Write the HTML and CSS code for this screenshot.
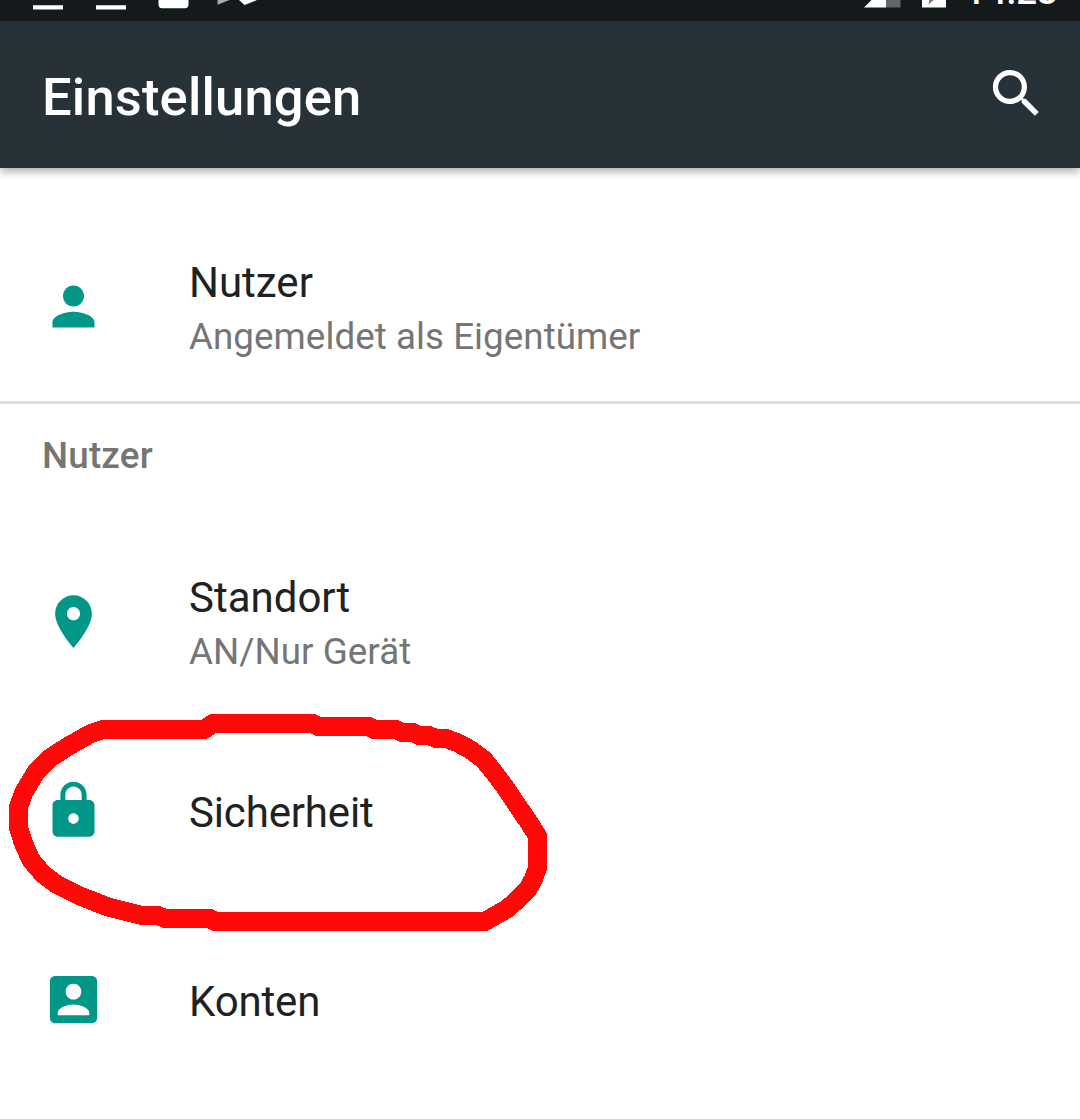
FILE: index.html
```
<!DOCTYPE html>
<html lang="de">
<head>
<meta charset="utf-8">
<title>Einstellungen</title>
<link rel="stylesheet" href="styles.css">
</head>
<body>
<div class="status-bar">
  <svg class="status-left" width="270" height="21" viewBox="0 0 270 21">
    <path fill="#fff" d="M33 5.3h30v4.2H33zM96 5.3h30v4.2H96zM158.500 0h30v4.500q0 3.700-3.500 3.700h-23q-3.500 0-3.500-3.700z"/>
    <path fill="#a9abac" d="M217.500 0h12l-12 4.800z"/>
    <path fill="#fff" d="M239 0h18l-12.500 5z"/>
  </svg>
  <div class="status-right">
    <svg width="90" height="21" viewBox="0 0 90 21">
      <path fill="#fff" d="M7.500 0H22v7.500H0zM58 0h24v7.500H58z"/>
      <path fill="#636466" d="M22 0h14.500v7.500H22z"/>
      <path fill="#6c6e70" d="M65.500 0h4l-5 4.500z"/>
    </svg>
    <span class="clock">14:23</span>
  </div>
</div>
<header class="app-bar">
  <h1 class="app-title">Einstellungen</h1>
  <svg class="icon" viewBox="0 0 24 24"><path d="M15.500 14h-.79l-.28-.27C15.410 12.590 16 11.110 16 9.500 16 5.910 13.090 3 9.500 3S3 5.910 3 9.500 5.910 16 9.500 16c1.610 0 3.090-.59 4.230-1.570l.27.28v.79l5 4.990L20.490 19l-4.990-5zm-6 0C7.010 14 5 11.990 5 9.500S7.010 5 9.500 5 14 7.010 14 9.500 11.990 14 9.500 14z"/></svg>
</header>
<main class="settings">
  <section class="group group-first">
    <div class="row">
      <svg class="icon" viewBox="0 0 24 24"><path d="M12 12c2.210 0 4-1.790 4-4s-1.790-4-4-4-4 1.790-4 4 1.790 4 4 4zm0 2c-2.670 0-8 1.340-8 4v2h16v-2c0-2.660-5.330-4-8-4z"/></svg>
      <div class="row-text"><div class="row-title">Nutzer</div><div class="row-summary">Angemeldet als Eigentümer</div></div>
    </div>
  </section>
  <section class="group">
    <h2 class="group-title">Nutzer</h2>
    <div class="row">
      <svg class="icon" viewBox="0 0 24 24"><path d="M12 2C8.130 2 5 5.130 5 9c0 5.250 7 13 7 13s7-7.750 7-13c0-3.870-3.130-7-7-7zm0 9.500c-1.380 0-2.500-1.120-2.500-2.500s1.120-2.500 2.500-2.500 2.500 1.120 2.500 2.500-1.120 2.500-2.500 2.500z"/></svg>
      <div class="row-text"><div class="row-title">Standort</div><div class="row-summary">AN/Nur Gerät</div></div>
    </div>
    <div class="row marked">
      <svg class="icon" viewBox="0 0 24 24"><path d="M18 8h-1V6c0-2.760-2.240-5-5-5S7 3.240 7 6v2H6c-1.100 0-2 .9-2 2v10c0 1.100.9 2 2 2h12c1.100 0 2-.9 2-2V10c0-1.100-.9-2-2-2zm-6 9c-1.100 0-2-.9-2-2s.9-2 2-2 2 .9 2 2-.9 2-2 2zm3.100-9H8.900V6c0-1.710 1.390-3.100 3.100-3.100 1.710 0 3.100 1.390 3.100 3.100v2z"/></svg>
      <div class="row-text row-text-single"><div class="row-title">Sicherheit</div></div>
      <svg class="marker" viewBox="0 700 560 240"><path d="M103 729.500H204L213 723.500H313L318 726.500H369L374 729.500H396L402 732.500H413L419 735.500H429L436 738.500H446L458 743 471 750 484 760 493 771 505 787 517 805 528 821 537.500 836V868L533 880 528 889 518 899 507 909 496 915 485 921.500H215L210 918.500H165L158 915.500H142L128 912 108 907 80 896 56 884 43 874 31 860 23 842 18.500 828V807L24 792 36 772 50 758 67 747 90 734Z"/></svg>
    </div>
    <div class="row">
      <svg class="icon" viewBox="0 0 24 24"><path d="M3 5v14c0 1.100.89 2 2 2h14c1.100 0 2-.9 2-2V5c0-1.100-.9-2-2-2H5c-1.110 0-2 .9-2 2zm12 4c0 1.660-1.340 3-3 3s-3-1.340-3-3 1.340-3 3-3 3 1.340 3 3zm-9 8c0-2 4-3.100 6-3.100s6 1.100 6 3.100v1H6v-1z"/></svg>
      <div class="row-text row-text-single"><div class="row-title">Konten</div></div>
    </div>
  </section>
</main>
</body>
</html>
```
FILE: styles.css
```
body {
  margin: 0;
  height: 1119px;
  overflow: hidden;
  background: #fff;
  color: #212121;
  font-family: Roboto, sans-serif;
}

svg {
  display: block;
  flex: none;
}

.status-bar {
  position: relative;
  z-index: 1;
  display: flex;
  justify-content: space-between;
  height: 21px;
  overflow: hidden;
  background: #14191b;
  color: #fff;
}

.status-right {
  display: flex;
  align-items: flex-end;
  gap: 11px;
  padding-right: 22px;
}

.clock {
  font-size: 36.75px;
  font-weight: 500;
  line-height: 43px;
  margin-bottom: 8px;
}

.app-bar {
  position: relative;
  display: flex;
  align-items: center;
  justify-content: space-between;
  box-sizing: border-box;
  height: 147px;
  padding: 0 32px 0 42px;
  background: #273238;
  color: #fff;
  box-shadow: 0 3px 9px rgba(0, 0, 0, 0.36);
}

.app-bar .icon {
  margin-bottom: 2px;
}

.app-title {
  margin: 5px 0 0;
  font-size: 52.5px;
  font-weight: 500;
  line-height: 62px;
  letter-spacing: 0.17px;
}

.icon {
  width: 63px;
  height: 63px;
  fill: currentColor;
}

.settings {
  padding-top: 44px;
}

.group-first {
  border-bottom: 3px solid #dedede;
}

.group-title {
  box-sizing: border-box;
  height: 123px;
  margin: 0;
  padding: 30px 42px 0;
  color: #757575;
  font-size: 36.75px;
  font-weight: 500;
  line-height: 43px;
  letter-spacing: 0.2px;
}

.row {
  position: relative;
  display: flex;
  align-items: center;
  gap: 84px;
  height: 189px;
  padding: 0 42px;
}

.row .icon {
  color: #009688;
}

.row-text {
  padding-top: 3px;
}

.row-text-single {
  padding-top: 4px;
}

.row-title {
  font-size: 42px;
  line-height: 49px;
}

.row-text-single .row-title {
  letter-spacing: -0.15px;
}

.row-summary {
  margin-top: 8px;
  color: #757575;
  font-size: 36.75px;
  line-height: 43px;
  letter-spacing: 0.05px;
}

.marker {
  position: absolute;
  top: -16px;
  left: 0;
  width: 560px;
  height: 240px;
  fill: none;
  stroke: #ff0808;
  stroke-width: 19px;
  stroke-linejoin: round;
  shape-rendering: crispEdges;
}
```
